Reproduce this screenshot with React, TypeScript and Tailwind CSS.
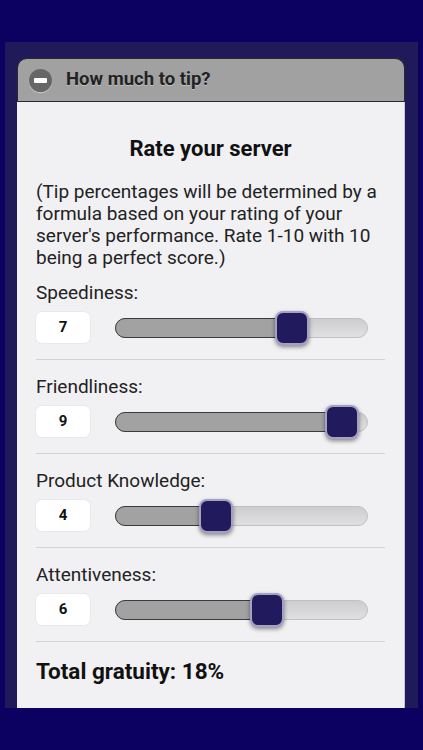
import React from "react";

const rows = [
  { label: "Speediness:", value: 7 },
  { label: "Friendliness:", value: 9 },
  { label: "Product Knowledge:", value: 4 },
  { label: "Attentiveness:", value: 6 },
];

function Slider({ value }: { value: number }) {
  const pct = (value / 10) * 100;
  return (
    <div className="relative h-[20px] flex-1 rounded-full border border-[#c0c0c4] bg-gradient-to-b from-[#cdcdd0] to-[#e0e0e3]">
      <div
        className="absolute left-[-1px] top-[-1px] h-[20px] rounded-l-full border border-[#3a3a3a] bg-[#a2a2a2]"
        style={{ width: `calc(${pct}% + 2px)` }}
      />
      <div
        className="absolute top-1/2 h-[34px] w-[34px] -translate-x-1/2 -translate-y-1/2 rounded-[8px] border-2 border-[#a4a2c4] bg-[#211a5c] shadow-[0_2px_4px_rgba(0,0,0,0.45)]"
        style={{ left: `${pct}%` }}
      />
    </div>
  );
}

export default function App() {
  return (
    <div
      className="min-h-[750px] bg-[#0c0060] pt-[42px]"
      style={{ fontFamily: "Roboto, 'Liberation Sans', sans-serif" }}
    >
      <div className="mx-[5px] flex h-[666px] flex-col overflow-hidden bg-[#211a5a] pl-[12px] pr-[13px] pt-[16px]">
        <div className="flex h-[44px] shrink-0 items-center rounded-t-[10px] border border-[#2a2a2a] bg-[#a1a1a1] pl-[11px]">
          <div className="flex h-[23px] w-[23px] items-center justify-center rounded-full bg-[#666666] shadow-[0_1px_1px_rgba(255,255,255,0.4)]">
            <div className="h-[5px] w-[13px] rounded-[1px] bg-white" />
          </div>
          <span className="ml-[14px] text-[18.5px] font-bold text-[#222] [text-shadow:0_1px_0_rgba(255,255,255,0.35)]">
            How much to tip?
          </span>
        </div>
        <div className="flex-1 border-r border-[#c6c4dc] bg-[#f1f1f4] pl-[19px] pr-[19px] pt-[34px] text-[#222]">
          <h3 className="text-center text-[22px] font-bold leading-[26px] text-[#111]">
            Rate your server
          </h3>
          <p className="mt-[19px] text-[19px] leading-[22px] text-[#222]">
            (Tip percentages will be determined by a formula based on your rating of your server's performance. Rate 1-10 with 10 being a perfect score.)
          </p>
          <div className="mt-[13px]">
            {rows.map((r) => (
              <div key={r.label}>
                <div className="text-[19px] leading-[22px] text-[#222]">{r.label}</div>
                <div className="mt-[8px] flex h-[31px] items-center">
                  <div className="flex h-[31px] w-[54px] items-center justify-center rounded-[6px] bg-white text-[15px] font-bold text-[#111] shadow-[0_0_0_1px_rgba(0,0,0,0.03)]">
                    {r.value}
                  </div>
                  <div className="ml-[25px] mr-[17px] flex flex-1 items-center">
                    <Slider value={r.value} />
                  </div>
                </div>
                <div className="mb-[16px] mt-[16px] h-[1px] bg-[#d2d2d6]" />
              </div>
            ))}
          </div>
          <div className="mt-[6px] text-[22.5px] font-bold leading-[26px] text-[#111]">
            Total gratuity: 18%
          </div>
        </div>
      </div>
    </div>
  );
}
